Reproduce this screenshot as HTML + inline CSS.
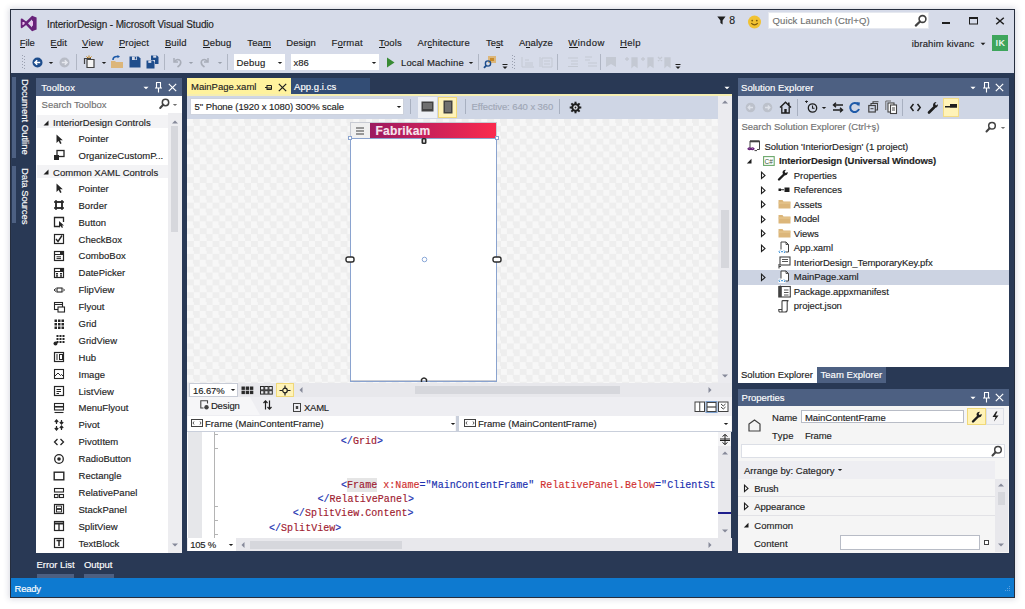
<!DOCTYPE html>
<html><head><meta charset="utf-8">
<style>
*{margin:0;padding:0;box-sizing:border-box}
html,body{width:1025px;height:609px;overflow:hidden;background:#fff;font-family:"Liberation Sans",sans-serif;font-size:10px;color:#1e1e1e}
.a{position:absolute;white-space:nowrap}
.t{line-height:1;-webkit-text-stroke:0.15px currentColor}
svg.a{overflow:visible}
</style></head><body>
<div class="a" style="left:10px;top:9px;width:1005px;height:589px;background:#262e3e;box-shadow:0 0 6px 1px rgba(40,50,90,0.18)"></div>
<div class="a" style="left:11px;top:10px;width:1003px;height:587px;background:#293955;"></div>
<div class="a" style="left:11px;top:10px;width:1003px;height:63px;background:#d6dbe9;"></div>
<svg class="a" style="left:16px;top:12px;" width="28" height="22" viewBox="0 0 28 22"><path d="M5.6 7.3 L11 11.3 L5.6 15.3 Z" fill="#f0c0f0" stroke="#68217a" stroke-width="1.7" stroke-linejoin="round"/><path d="M17 4.6 L10.2 11.3 L17 18.4" fill="none" stroke="#68217a" stroke-width="2.6"/><path d="M16 3.8 L20.6 5.6 L20.6 17.4 L16 19.2 Z" fill="#68217a"/><path d="M13.6 11.3 L17 8.4 L17 14.2 Z" fill="#f0c0f0"/></svg>
<div class="a t" style="left:47px;top:20px;font-size:10px;color:#1e1e1e;letter-spacing:-0.147px;font-weight:normal;font-family:'Liberation Sans',sans-serif;">InteriorDesign - Microsoft Visual Studio</div>
<svg class="a" style="left:716.5px;top:15.5px;" width="9" height="9" viewBox="0 0 9 9"><path d="M0.3 0.5 L8.5 0.5 L5.6 4.4 L5.6 8.6 L3.4 7 L3.4 4.4 Z" fill="#1e1e1e"/></svg>
<div class="a t" style="left:729.3px;top:15px;font-size:10.5px;color:#1e1e1e;letter-spacing:0.36px;font-weight:normal;font-family:'Liberation Sans',sans-serif;">8</div>
<svg class="a" style="left:747px;top:15px;" width="15" height="14" viewBox="0 0 15 14"><circle cx="7.5" cy="7" r="6.5" fill="#f1c232"/><circle cx="5.2" cy="5.6" r="0.9" fill="#7a5a10"/><circle cx="9.8" cy="5.6" r="0.9" fill="#7a5a10"/><path d="M4.2 8.2 Q7.5 11.5 10.8 8.2" stroke="#7a5a10" stroke-width="1.1" fill="none"/></svg>
<div class="a" style="left:768px;top:12px;width:161px;height:16.5px;background:#ffffff;border:1px solid #e6e9f0"></div>
<div class="a t" style="left:772.6px;top:16px;font-size:9.5px;color:#717171;letter-spacing:0.116px;font-weight:normal;font-family:'Liberation Sans',sans-serif;">Quick Launch (Ctrl+Q)</div>
<svg class="a" style="left:914px;top:14px;" width="14" height="13" viewBox="0 0 14 13"><circle cx="8.5" cy="5" r="3.4" stroke="#424242" stroke-width="1.6" fill="none"/><path d="M6 7.5 L1.8 11.6" stroke="#424242" stroke-width="2.2" stroke-linecap="round"/></svg>
<div class="a" style="left:942px;top:21.5px;width:7.5px;height:2.5px;background:#1e1e1e;"></div>
<svg class="a" style="left:968px;top:16px;" width="11" height="9" viewBox="0 0 11 9"><rect x="1.5" y="1.5" width="8" height="6.5" fill="none" stroke="#1e1e1e" stroke-width="1"/><rect x="1" y="1" width="9" height="2" fill="#1e1e1e"/></svg>
<svg class="a" style="left:995px;top:17px;" width="10" height="8" viewBox="0 0 10 8"><path d="M1.2 0.8 L8.8 7.2 M8.8 0.8 L1.2 7.2" stroke="#1e1e1e" stroke-width="1.5"/></svg>
<div class="a t" style="left:19.8px;top:38px;font-size:9.5px;color:#1e1e1e;letter-spacing:-0.127px;font-weight:normal;font-family:'Liberation Sans',sans-serif;">File</div>
<div class="a" style="left:20.1px;top:47px;width:5.2px;height:1px;background:#1e1e1e;"></div>
<div class="a t" style="left:50.2px;top:38px;font-size:9.5px;color:#1e1e1e;letter-spacing:0.108px;font-weight:normal;font-family:'Liberation Sans',sans-serif;">Edit</div>
<div class="a" style="left:50.5px;top:47px;width:6.0px;height:1px;background:#1e1e1e;"></div>
<div class="a t" style="left:82px;top:38px;font-size:9.5px;color:#1e1e1e;letter-spacing:0.27px;font-weight:normal;font-family:'Liberation Sans',sans-serif;">View</div>
<div class="a" style="left:82.3px;top:47px;width:6.1px;height:1px;background:#1e1e1e;"></div>
<div class="a t" style="left:119px;top:38px;font-size:9.5px;color:#1e1e1e;letter-spacing:0.033px;font-weight:normal;font-family:'Liberation Sans',sans-serif;">Project</div>
<div class="a" style="left:119.3px;top:47px;width:5.9px;height:1px;background:#1e1e1e;"></div>
<div class="a t" style="left:164.9px;top:38px;font-size:9.5px;color:#1e1e1e;letter-spacing:0.135px;font-weight:normal;font-family:'Liberation Sans',sans-serif;">Build</div>
<div class="a" style="left:165.2px;top:47px;width:6.0px;height:1px;background:#1e1e1e;"></div>
<div class="a t" style="left:202.7px;top:38px;font-size:9.5px;color:#1e1e1e;letter-spacing:0.161px;font-weight:normal;font-family:'Liberation Sans',sans-serif;">Debug</div>
<div class="a" style="left:203.0px;top:47px;width:6.5px;height:1px;background:#1e1e1e;"></div>
<div class="a t" style="left:247.3px;top:38px;font-size:9.5px;color:#1e1e1e;letter-spacing:0.142px;font-weight:normal;font-family:'Liberation Sans',sans-serif;">Team</div>
<div class="a" style="left:263.2px;top:47px;width:7.6px;height:1px;background:#1e1e1e;"></div>
<div class="a t" style="left:286.3px;top:38px;font-size:9.5px;color:#1e1e1e;letter-spacing:-0.012px;font-weight:normal;font-family:'Liberation Sans',sans-serif;">Design</div>
<div class="a t" style="left:331.5px;top:38px;font-size:9.5px;color:#1e1e1e;letter-spacing:0.202px;font-weight:normal;font-family:'Liberation Sans',sans-serif;">Format</div>
<div class="a" style="left:337.8px;top:47px;width:4.9px;height:1px;background:#1e1e1e;"></div>
<div class="a t" style="left:379px;top:38px;font-size:9.5px;color:#1e1e1e;letter-spacing:0.125px;font-weight:normal;font-family:'Liberation Sans',sans-serif;">Tools</div>
<div class="a" style="left:379.3px;top:47px;width:5.4px;height:1px;background:#1e1e1e;"></div>
<div class="a t" style="left:417.6px;top:38px;font-size:9.5px;color:#1e1e1e;letter-spacing:0.126px;font-weight:normal;font-family:'Liberation Sans',sans-serif;">Architecture</div>
<div class="a" style="left:427.7px;top:47px;width:4.3px;height:1px;background:#1e1e1e;"></div>
<div class="a t" style="left:486px;top:38px;font-size:9.5px;color:#1e1e1e;letter-spacing:-0.056px;font-weight:normal;font-family:'Liberation Sans',sans-serif;">Test</div>
<div class="a" style="left:496.3px;top:47px;width:4.1px;height:1px;background:#1e1e1e;"></div>
<div class="a t" style="left:519px;top:38px;font-size:9.5px;color:#1e1e1e;letter-spacing:0.0px;font-weight:normal;font-family:'Liberation Sans',sans-serif;">Analyze</div>
<div class="a" style="left:525.7px;top:47px;width:4.7px;height:1px;background:#1e1e1e;"></div>
<div class="a t" style="left:568.3px;top:38px;font-size:9.5px;color:#1e1e1e;letter-spacing:0.452px;font-weight:normal;font-family:'Liberation Sans',sans-serif;">Window</div>
<div class="a" style="left:568.6px;top:47px;width:9.0px;height:1px;background:#1e1e1e;"></div>
<div class="a t" style="left:620px;top:38px;font-size:9.5px;color:#1e1e1e;letter-spacing:0.315px;font-weight:normal;font-family:'Liberation Sans',sans-serif;">Help</div>
<div class="a" style="left:620.3px;top:47px;width:6.7px;height:1px;background:#1e1e1e;"></div>
<div class="a t" style="left:911.7px;top:39px;font-size:9.5px;color:#1e1e1e;letter-spacing:0.149px;font-weight:normal;font-family:'Liberation Sans',sans-serif;">ibrahim kivanc</div>
<svg class="a" style="left:979.3px;top:40.5px;" width="8" height="6" viewBox="0 0 8 6"><path d="M1.6 1.8 L6.4 1.8 L4 4.2 Z" fill="#1e1e1e"/></svg>
<div class="a" style="left:992px;top:35px;width:16px;height:16px;background:#3ea55c;"></div>
<div class="a t" style="left:995.5px;top:38px;font-size:9.5px;color:#ffffff;letter-spacing:0.412px;font-weight:normal;font-family:'Liberation Sans',sans-serif;">IK</div>
<div class="a" style="left:22px;top:55px;width:1px;height:1px;background:#9aa0b0;"></div>
<div class="a" style="left:24px;top:56px;width:1px;height:1px;background:#9aa0b0;"></div>
<div class="a" style="left:22px;top:58px;width:1px;height:1px;background:#9aa0b0;"></div>
<div class="a" style="left:24px;top:59px;width:1px;height:1px;background:#9aa0b0;"></div>
<div class="a" style="left:22px;top:61px;width:1px;height:1px;background:#9aa0b0;"></div>
<div class="a" style="left:24px;top:62px;width:1px;height:1px;background:#9aa0b0;"></div>
<div class="a" style="left:22px;top:64px;width:1px;height:1px;background:#9aa0b0;"></div>
<div class="a" style="left:24px;top:65px;width:1px;height:1px;background:#9aa0b0;"></div>
<div class="a" style="left:22px;top:67px;width:1px;height:1px;background:#9aa0b0;"></div>
<div class="a" style="left:24px;top:68px;width:1px;height:1px;background:#9aa0b0;"></div>
<svg class="a" style="left:32px;top:57px;" width="11" height="11" viewBox="0 0 11 11"><circle cx="5.5" cy="5.5" r="5" fill="#1e4d8c"/><path d="M8.2 5.5 L3 5.5 M5.2 3.2 L2.9 5.5 L5.2 7.8" stroke="#fff" stroke-width="1.5" fill="none"/></svg>
<svg class="a" style="left:46.6px;top:59.5px;" width="8" height="6" viewBox="0 0 8 6"><path d="M1.7999999999999998 1.9 L6.2 1.9 L4 4.1 Z" fill="#1e1e1e"/></svg>
<svg class="a" style="left:59px;top:57px;" width="11" height="11" viewBox="0 0 11 11"><circle cx="5.5" cy="5.5" r="5" fill="#b8bcc6"/><path d="M2.8 5.5 L8 5.5 M5.8 3.2 L8.1 5.5 L5.8 7.8" stroke="#e6e8ee" stroke-width="1.5" fill="none"/></svg>
<div class="a" style="left:76px;top:54px;width:1px;height:16px;background:#b0b6c4;"></div>
<svg class="a" style="left:83px;top:55px;" width="14" height="14" viewBox="0 0 14 14"><path d="M4 4.5 L11 4.5 L11 12.5 L4 12.5 Z" fill="#f5f5f5" stroke="#424242" stroke-width="1.2"/><path d="M1.5 9 L1.5 3.5 L8 3.5" stroke="#424242" stroke-width="1.2" fill="none"/><path d="M6 0.5 L6 3 M3.5 1.5 L5 3 M8.5 1.5 L7 3" stroke="#c27d0e" stroke-width="1"/></svg>
<svg class="a" style="left:99.5px;top:59.5px;" width="8" height="6" viewBox="0 0 8 6"><path d="M1.7999999999999998 1.9 L6.2 1.9 L4 4.1 Z" fill="#1e1e1e"/></svg>
<svg class="a" style="left:110px;top:55px;" width="14" height="14" viewBox="0 0 14 14"><path d="M1 6 L5 6 L6 7 L13 7 L13 13 L1 13 Z" fill="#dcb67a"/><path d="M3 5 Q3 1.5 7 1.5 L8 1.5" stroke="#1e5aa8" stroke-width="1.6" fill="none"/><path d="M7.5 0 L10 1.6 L7.5 3.2 Z" fill="#1e5aa8"/></svg>
<svg class="a" style="left:129px;top:56px;" width="12" height="12" viewBox="0 0 12 12"><path d="M0.5 0.5 L9.5 0.5 L11.5 2.5 L11.5 11.5 L0.5 11.5 Z" fill="#1e4d8c"/><rect x="3" y="0.5" width="5" height="3.5" fill="#d6dbe9"/><rect x="5.8" y="1" width="1.4" height="2.4" fill="#1e4d8c"/></svg>
<svg class="a" style="left:146px;top:55px;" width="13" height="14" viewBox="0 0 13 14"><path d="M0.5 5.5 L7 5.5 L8.5 7 L8.5 13.5 L0.5 13.5 Z" fill="#1e4d8c"/><path d="M5 0.5 L11 0.5 L12.5 2 L12.5 9 L9 9 L9 5 L5 5 Z" fill="#1e4d8c"/><rect x="2.3" y="5.5" width="3" height="2.4" fill="#d6dbe9"/><rect x="7.2" y="0.5" width="3" height="2.2" fill="#d6dbe9"/></svg>
<div class="a" style="left:163.5px;top:54px;width:1.0px;height:16px;background:#b0b6c4;"></div>
<svg class="a" style="left:171px;top:56px;" width="12" height="12" viewBox="0 0 12 12"><path d="M3 2 L3 6 L7 6" stroke="#a8adb8" stroke-width="1.5" fill="none"/><path d="M3.5 5.5 Q6 2.5 8.5 4 Q11 6 8.5 9.5 L6.5 11" stroke="#a8adb8" stroke-width="1.6" fill="none"/></svg>
<svg class="a" style="left:187px;top:59.5px;" width="8" height="6" viewBox="0 0 8 6"><path d="M1.7999999999999998 1.9 L6.2 1.9 L4 4.1 Z" fill="#9aa0ac"/></svg>
<svg class="a" style="left:199px;top:56px;" width="12" height="12" viewBox="0 0 12 12"><path d="M9 2 L9 6 L5 6" stroke="#a8adb8" stroke-width="1.5" fill="none"/><path d="M8.5 5.5 Q6 2.5 3.5 4 Q1 6 3.5 9.5 L5.5 11" stroke="#a8adb8" stroke-width="1.6" fill="none"/></svg>
<svg class="a" style="left:216px;top:59.5px;" width="8" height="6" viewBox="0 0 8 6"><path d="M1.7999999999999998 1.9 L6.2 1.9 L4 4.1 Z" fill="#9aa0ac"/></svg>
<div class="a" style="left:227px;top:54px;width:1px;height:16px;background:#b0b6c4;"></div>
<div class="a" style="left:234px;top:54px;width:51px;height:16px;background:#ffffff;"></div>
<div class="a t" style="left:236.6px;top:58px;font-size:9.5px;color:#1e1e1e;letter-spacing:0.161px;font-weight:normal;font-family:'Liberation Sans',sans-serif;">Debug</div>
<svg class="a" style="left:275.7px;top:59.5px;" width="8" height="6" viewBox="0 0 8 6"><path d="M1.7999999999999998 1.9 L6.2 1.9 L4 4.1 Z" fill="#1e1e1e"/></svg>
<div class="a" style="left:291px;top:54px;width:88px;height:16px;background:#ffffff;"></div>
<div class="a t" style="left:293.5px;top:58px;font-size:9.5px;color:#1e1e1e;letter-spacing:-0.006px;font-weight:normal;font-family:'Liberation Sans',sans-serif;">x86</div>
<svg class="a" style="left:369.5px;top:59.5px;" width="8" height="6" viewBox="0 0 8 6"><path d="M1.7999999999999998 1.9 L6.2 1.9 L4 4.1 Z" fill="#1e1e1e"/></svg>
<svg class="a" style="left:386px;top:57px;" width="9" height="11" viewBox="0 0 9 11"><path d="M1 0.5 L8.5 5.5 L1 10.5 Z" fill="#388a34"/></svg>
<div class="a t" style="left:401px;top:58px;font-size:9.5px;color:#1e1e1e;letter-spacing:0.119px;font-weight:normal;font-family:'Liberation Sans',sans-serif;">Local Machine</div>
<svg class="a" style="left:466.6px;top:59.5px;" width="8" height="6" viewBox="0 0 8 6"><path d="M1.7999999999999998 1.9 L6.2 1.9 L4 4.1 Z" fill="#1e1e1e"/></svg>
<div class="a" style="left:477.5px;top:54px;width:1.0px;height:16px;background:#b0b6c4;"></div>
<svg class="a" style="left:483px;top:55px;" width="14" height="14" viewBox="0 0 14 14"><rect x="5" y="1" width="8" height="7" fill="#dcb67a"/><rect x="7" y="3" width="4" height="3" fill="#c98b2a"/><circle cx="5" cy="8.5" r="2.6" stroke="#1e4d8c" stroke-width="1.4" fill="none"/><path d="M3.3 10.3 L1 12.8" stroke="#1e4d8c" stroke-width="1.8"/></svg>
<svg class="a" style="left:502px;top:64px;" width="7" height="6" viewBox="0 0 7 6"><rect x="0.5" y="0" width="5" height="1" fill="#1e1e1e"/><path d="M0.5 2.5 L5.5 2.5 L3 5 Z" fill="#1e1e1e"/></svg>
<div class="a" style="left:512px;top:55px;width:1px;height:1px;background:#9aa0b0;"></div>
<div class="a" style="left:514px;top:56px;width:1px;height:1px;background:#9aa0b0;"></div>
<div class="a" style="left:512px;top:58px;width:1px;height:1px;background:#9aa0b0;"></div>
<div class="a" style="left:514px;top:59px;width:1px;height:1px;background:#9aa0b0;"></div>
<div class="a" style="left:512px;top:61px;width:1px;height:1px;background:#9aa0b0;"></div>
<div class="a" style="left:514px;top:62px;width:1px;height:1px;background:#9aa0b0;"></div>
<div class="a" style="left:512px;top:64px;width:1px;height:1px;background:#9aa0b0;"></div>
<div class="a" style="left:514px;top:65px;width:1px;height:1px;background:#9aa0b0;"></div>
<div class="a" style="left:512px;top:67px;width:1px;height:1px;background:#9aa0b0;"></div>
<div class="a" style="left:514px;top:68px;width:1px;height:1px;background:#9aa0b0;"></div>
<svg class="a" style="left:521px;top:56px;" width="14" height="12" viewBox="0 0 14 12"><path d="M1 1 L1 11 L13 11 M4 4 L8 4 M4 7 L12 7 M4 9 L12 9" stroke="#c4c9d3" stroke-width="1" fill="none"/></svg>
<svg class="a" style="left:539px;top:56px;" width="14" height="12" viewBox="0 0 14 12"><path d="M1 1 L1 11 M3 2 L13 2 L13 11 L3 11 Z M5 5 L11 5 M5 8 L11 8" stroke="#c4c9d3" stroke-width="1" fill="none"/></svg>
<div class="a" style="left:556.5px;top:54px;width:1.0px;height:16px;background:#b0b6c4;"></div>
<svg class="a" style="left:567px;top:57px;" width="12" height="10" viewBox="0 0 12 10"><path d="M1 1 L11 1 M4 4 L11 4 M4 7 L11 7 M1 9.5 L11 9.5" stroke="#c4c9d3" stroke-width="1"/></svg>
<svg class="a" style="left:584px;top:56px;" width="14" height="12" viewBox="0 0 14 12"><path d="M1 1 L8 1 M1 4 L6 4 M4 7 L13 7 M4 10 L13 10" stroke="#c4c9d3" stroke-width="1"/></svg>
<div class="a" style="left:599.5px;top:54px;width:1.0px;height:16px;background:#b0b6c4;"></div>
<svg class="a" style="left:605px;top:56px;" width="12" height="12" viewBox="0 0 12 12"><path d="M1 1 L11 1 L11 11 L6 8 L1 11 Z" fill="#c4c9d3"/></svg>
<svg class="a" style="left:624px;top:56px;" width="14" height="12" viewBox="0 0 14 12"><path d="M3 1 L3 5 M1 3 L5 3 M8 2 L13 2 L13 11 L10 9 L8 11 Z" stroke="#c4c9d3" stroke-width="1.3" fill="#c4c9d3"/></svg>
<svg class="a" style="left:640px;top:56px;" width="14" height="12" viewBox="0 0 14 12"><path d="M3 1 L3 5 M1 3 L5 3 M8 2 L13 2 L13 11 L10 9 L8 11 Z" stroke="#c4c9d3" stroke-width="1.3" fill="#c4c9d3"/></svg>
<svg class="a" style="left:657px;top:56px;" width="14" height="12" viewBox="0 0 14 12"><path d="M1 1 L5 5 M5 1 L1 5 M8 2 L13 2 L13 11 L10 9 L8 11 Z" stroke="#c4c9d3" stroke-width="1.3" fill="#c4c9d3"/></svg>
<svg class="a" style="left:675px;top:64px;" width="7" height="6" viewBox="0 0 7 6"><rect x="0.5" y="0" width="5" height="1" fill="#1e1e1e"/><path d="M0.5 2.5 L5.5 2.5 L3 5 Z" fill="#1e1e1e"/></svg>
<div class="a" style="left:12px;top:77px;width:4px;height:81px;background:#4d6082;"></div>
<div class="a" style="left:12px;top:166px;width:4px;height:57px;background:#4d6082;"></div>
<div class="a t" style="left:19.5px;top:79px;font-size:9.5px;color:#ffffff;letter-spacing:-0.02px;transform-origin:0 0;transform:translate(10px,0) rotate(90deg)">Document Outline</div>
<div class="a t" style="left:19.5px;top:168px;font-size:9.5px;color:#ffffff;letter-spacing:-0.1px;transform-origin:0 0;transform:translate(10px,0) rotate(90deg)">Data Sources</div>
<div class="a" style="left:36px;top:78px;width:145.5px;height:18px;background:#4d6082;"></div>
<div class="a t" style="left:41.3px;top:83px;font-size:9.5px;color:#ffffff;letter-spacing:0.151px;font-weight:normal;font-family:'Liberation Sans',sans-serif;">Toolbox</div>
<svg class="a" style="left:142px;top:84.5px;" width="8" height="6" viewBox="0 0 8 6"><path d="M1.4 1.7 L6.6 1.7 L4 4.3 Z" fill="#ffffff"/></svg>
<svg class="a" style="left:154px;top:82px;" width="9" height="11" viewBox="0 0 9 11"><path d="M2 0.5 L7 0.5 M2.5 0.5 L2.5 6 M6.5 0.5 L6.5 6 M1 6 L8 6 M4.5 6 L4.5 10.5" stroke="#ffffff" stroke-width="1.1" fill="none"/></svg>
<svg class="a" style="left:167.5px;top:83px;" width="9" height="9" viewBox="0 0 9 9"><path d="M0.8 0.8 L8.2 8.2 M8.2 0.8 L0.8 8.2" stroke="#ffffff" stroke-width="1.2"/></svg>
<div class="a" style="left:36px;top:96px;width:145.5px;height:16px;background:#ffffff;"></div>
<div class="a t" style="left:41.6px;top:100px;font-size:9.5px;color:#717171;letter-spacing:-0.037px;font-weight:normal;font-family:'Liberation Sans',sans-serif;">Search Toolbox</div>
<svg class="a" style="left:159px;top:98px;" width="11" height="12" viewBox="0 0 11 12"><circle cx="6.5" cy="4.5" r="3.2" stroke="#424242" stroke-width="1.5" fill="none"/><path d="M4.2 6.8 L1.2 10" stroke="#424242" stroke-width="2" stroke-linecap="round"/></svg>
<svg class="a" style="left:171.3px;top:101.5px;" width="8" height="6" viewBox="0 0 8 6"><path d="M1.7999999999999998 1.9 L6.2 1.9 L4 4.1 Z" fill="#717171"/></svg>
<div class="a" style="left:36px;top:112px;width:145.5px;height:440.5px;background:#ffffff;"></div>
<div class="a" style="left:167.5px;top:113px;width:14.0px;height:439.5px;background:#ededf0;"></div>
<div class="a" style="left:171.4px;top:126px;width:6.9px;height:106px;background:#d6d7dc;"></div>
<svg class="a" style="left:171px;top:118.5px;" width="8" height="6" viewBox="0 0 8 6"><path d="M1 4.5 L7 4.5 L4 1.5 Z" fill="#868999"/></svg>
<svg class="a" style="left:171px;top:542px;" width="8" height="6" viewBox="0 0 8 6"><path d="M1 1.5 L7 1.5 L4 4.5 Z" fill="#868999"/></svg>
<div class="a" style="left:37px;top:115.0px;width:130.5px;height:13.4px;background:#f3f3f5;"></div>
<svg class="a" style="left:42px;top:118.5px;" width="8" height="8" viewBox="0 0 8 8"><path d="M1.5 6.5 L6.5 6.5 L6.5 1.5 Z" fill="#1e1e1e"/></svg>
<div class="a t" style="left:53px;top:118px;font-size:9.5px;color:#1e1e1e;letter-spacing:0.022px;font-weight:normal;font-family:'Liberation Sans',sans-serif;">InteriorDesign Controls</div>
<svg class="a" style="left:52.8px;top:132.5px;" width="12" height="12" viewBox="0 0 12 12"><path d="M3.5 1.5 L3.5 10 L5.6 8 L7.2 11 L8.6 10.3 L7 7.3 L9.8 7.3 Z" fill="#262626"/></svg>
<div class="a t" style="left:78.5px;top:134px;font-size:9.5px;color:#1e1e1e;letter-spacing:0.023px;font-weight:normal;font-family:'Liberation Sans',sans-serif;">Pointer</div>
<svg class="a" style="left:52.8px;top:149.4px;" width="12" height="12" viewBox="0 0 12 12"><rect x="4" y="1.5" width="7" height="6" fill="none" stroke="#262626" stroke-width="1.3"/><rect x="1" y="6" width="5" height="5" fill="#262626"/></svg>
<div class="a t" style="left:78.5px;top:151px;font-size:9.5px;color:#1e1e1e;letter-spacing:0.025px;font-weight:normal;font-family:'Liberation Sans',sans-serif;">OrganizeCustomP...</div>
<div class="a" style="left:37px;top:164.8px;width:130.5px;height:13.4px;background:#f3f3f5;"></div>
<svg class="a" style="left:42px;top:168.3px;" width="8" height="8" viewBox="0 0 8 8"><path d="M1.5 6.5 L6.5 6.5 L6.5 1.5 Z" fill="#1e1e1e"/></svg>
<div class="a t" style="left:53px;top:168px;font-size:9.5px;color:#1e1e1e;letter-spacing:0.028px;font-weight:normal;font-family:'Liberation Sans',sans-serif;">Common XAML Controls</div>
<svg class="a" style="left:52.8px;top:182.3px;" width="12" height="12" viewBox="0 0 12 12"><path d="M3.5 1.5 L3.5 10 L5.6 8 L7.2 11 L8.6 10.3 L7 7.3 L9.8 7.3 Z" fill="#262626"/></svg>
<div class="a t" style="left:78.5px;top:184px;font-size:9.5px;color:#1e1e1e;letter-spacing:0.023px;font-weight:normal;font-family:'Liberation Sans',sans-serif;">Pointer</div>
<svg class="a" style="left:52.8px;top:199.20000000000002px;" width="12" height="12" viewBox="0 0 12 12"><rect x="3" y="3" width="6" height="6" fill="none" stroke="#262626" stroke-width="1.4"/><path d="M1 3 L11 3 M1 9 L11 9 M3 1 L3 11 M9 1 L9 11" stroke="#262626" stroke-width="1.4"/></svg>
<div class="a t" style="left:78.5px;top:201px;font-size:9.5px;color:#1e1e1e;letter-spacing:0.025px;font-weight:normal;font-family:'Liberation Sans',sans-serif;">Border</div>
<svg class="a" style="left:52.8px;top:216.10000000000002px;" width="12" height="12" viewBox="0 0 12 12"><path d="M7 10.5 L1.5 10.5 L1.5 1.5 L10.5 1.5 L10.5 6" fill="none" stroke="#262626" stroke-width="1.3"/><path d="M6 5 L6 11.5 L7.5 10 L9 12 L10 11.3 L9 9.5 L11 9.5 Z" fill="#262626"/></svg>
<div class="a t" style="left:78.5px;top:218px;font-size:9.5px;color:#1e1e1e;letter-spacing:0.024px;font-weight:normal;font-family:'Liberation Sans',sans-serif;">Button</div>
<svg class="a" style="left:52.8px;top:233.00000000000003px;" width="12" height="12" viewBox="0 0 12 12"><rect x="1.5" y="1.5" width="9" height="9" fill="none" stroke="#262626" stroke-width="1.2"/><path d="M3 6 L5 8.5 L9 2.5" stroke="#262626" stroke-width="1.4" fill="none"/></svg>
<div class="a t" style="left:78.5px;top:235px;font-size:9.5px;color:#1e1e1e;letter-spacing:0.028px;font-weight:normal;font-family:'Liberation Sans',sans-serif;">CheckBox</div>
<svg class="a" style="left:52.8px;top:249.90000000000003px;" width="12" height="12" viewBox="0 0 12 12"><rect x="1.5" y="1.5" width="9" height="9" fill="none" stroke="#262626" stroke-width="1.2"/><path d="M1.5 4.5 L10.5 4.5 M3.5 6.8 L8 6.8 M3.5 8.6 L8 8.6" stroke="#262626" stroke-width="1"/><rect x="7" y="1.5" width="3.5" height="3" fill="#262626"/></svg>
<div class="a t" style="left:78.5px;top:251px;font-size:9.5px;color:#1e1e1e;letter-spacing:0.031px;font-weight:normal;font-family:'Liberation Sans',sans-serif;">ComboBox</div>
<svg class="a" style="left:52.8px;top:266.8px;" width="12" height="12" viewBox="0 0 12 12"><rect x="1.5" y="1.5" width="9" height="9" fill="none" stroke="#262626" stroke-width="1.2"/><path d="M1.5 4.5 L10.5 4.5" stroke="#262626" stroke-width="1"/><rect x="3" y="6" width="2" height="1.5" fill="#262626"/><rect x="7" y="6" width="2" height="1.5" fill="#262626"/><rect x="3" y="8.2" width="2" height="1.5" fill="#262626"/><rect x="7" y="8.2" width="2" height="1.5" fill="#262626"/><rect x="7" y="1.5" width="3.5" height="3" fill="#262626"/></svg>
<div class="a t" style="left:78.5px;top:268px;font-size:9.5px;color:#1e1e1e;letter-spacing:0.024px;font-weight:normal;font-family:'Liberation Sans',sans-serif;">DatePicker</div>
<svg class="a" style="left:52.8px;top:283.7px;" width="12" height="12" viewBox="0 0 12 12"><rect x="4" y="4" width="5" height="4" fill="none" stroke="#262626" stroke-width="1.1"/><path d="M3 4.5 L1 6 L3 7.5 M10 4.5 L11.5 6 L10 7.5" stroke="#262626" stroke-width="1" fill="none"/></svg>
<div class="a t" style="left:78.5px;top:285px;font-size:9.5px;color:#1e1e1e;letter-spacing:0.024px;font-weight:normal;font-family:'Liberation Sans',sans-serif;">FlipView</div>
<svg class="a" style="left:52.8px;top:300.59999999999997px;" width="12" height="12" viewBox="0 0 12 12"><rect x="1.5" y="1.5" width="8" height="7" fill="none" stroke="#262626" stroke-width="1.1"/><path d="M1.5 3.5 L9.5 3.5" stroke="#262626" stroke-width="1"/><rect x="5" y="6" width="6.5" height="5" fill="#fff" stroke="#262626" stroke-width="1.1"/></svg>
<div class="a t" style="left:78.5px;top:302px;font-size:9.5px;color:#1e1e1e;letter-spacing:0.023px;font-weight:normal;font-family:'Liberation Sans',sans-serif;">Flyout</div>
<svg class="a" style="left:52.8px;top:317.49999999999994px;" width="12" height="12" viewBox="0 0 12 12"><rect x="1.5" y="1.5" width="2.5" height="2.5" fill="#262626"/><rect x="1.5" y="5.0" width="2.5" height="2.5" fill="#262626"/><rect x="1.5" y="8.5" width="2.5" height="2.5" fill="#262626"/><rect x="5.0" y="1.5" width="2.5" height="2.5" fill="#262626"/><rect x="5.0" y="5.0" width="2.5" height="2.5" fill="#262626"/><rect x="5.0" y="8.5" width="2.5" height="2.5" fill="#262626"/><rect x="8.5" y="1.5" width="2.5" height="2.5" fill="#262626"/><rect x="8.5" y="5.0" width="2.5" height="2.5" fill="#262626"/><rect x="8.5" y="8.5" width="2.5" height="2.5" fill="#262626"/></svg>
<div class="a t" style="left:78.5px;top:319px;font-size:9.5px;color:#1e1e1e;letter-spacing:0.024px;font-weight:normal;font-family:'Liberation Sans',sans-serif;">Grid</div>
<svg class="a" style="left:52.8px;top:334.3999999999999px;" width="12" height="12" viewBox="0 0 12 12"><rect x="3.5" y="1" width="2" height="2" fill="#262626"/><rect x="3.5" y="4" width="2" height="2" fill="#262626"/><rect x="3.5" y="7" width="2" height="2" fill="#262626"/><rect x="6.5" y="1" width="2" height="2" fill="#262626"/><rect x="6.5" y="4" width="2" height="2" fill="#262626"/><rect x="6.5" y="7" width="2" height="2" fill="#262626"/><rect x="9.5" y="1" width="2" height="2" fill="#262626"/><rect x="9.5" y="4" width="2" height="2" fill="#262626"/><rect x="9.5" y="7" width="2" height="2" fill="#262626"/><circle cx="2.5" cy="9.5" r="2" fill="#262626"/></svg>
<div class="a t" style="left:78.5px;top:336px;font-size:9.5px;color:#1e1e1e;letter-spacing:0.025px;font-weight:normal;font-family:'Liberation Sans',sans-serif;">GridView</div>
<svg class="a" style="left:52.8px;top:351.2999999999999px;" width="12" height="12" viewBox="0 0 12 12"><rect x="1.5" y="1.5" width="9" height="9" fill="none" stroke="#262626" stroke-width="1.2"/><path d="M3 4 L5 4 M3 6 L5 6 M3 8 L5 8" stroke="#262626" stroke-width="1"/><rect x="6.5" y="3.5" width="3" height="5" fill="none" stroke="#262626" stroke-width="1"/></svg>
<div class="a t" style="left:78.5px;top:353px;font-size:9.5px;color:#1e1e1e;letter-spacing:0.031px;font-weight:normal;font-family:'Liberation Sans',sans-serif;">Hub</div>
<svg class="a" style="left:52.8px;top:368.1999999999999px;" width="12" height="12" viewBox="0 0 12 12"><rect x="1.5" y="1.5" width="9" height="9" fill="none" stroke="#262626" stroke-width="1.1"/><path d="M2 8 L5 5 L7.5 7.5 L8.5 6.5 L10.5 8.5" stroke="#262626" stroke-width="1" fill="none"/></svg>
<div class="a t" style="left:78.5px;top:370px;font-size:9.5px;color:#1e1e1e;letter-spacing:0.028px;font-weight:normal;font-family:'Liberation Sans',sans-serif;">Image</div>
<svg class="a" style="left:52.8px;top:385.09999999999985px;" width="12" height="12" viewBox="0 0 12 12"><rect x="1.5" y="1.5" width="9" height="9" fill="none" stroke="#262626" stroke-width="1.2"/><path d="M3.5 4.5 L8 4.5 M3.5 6.5 L8 6.5 M3.5 8.5 L6 8.5" stroke="#262626" stroke-width="1"/></svg>
<div class="a t" style="left:78.5px;top:387px;font-size:9.5px;color:#1e1e1e;letter-spacing:0.023px;font-weight:normal;font-family:'Liberation Sans',sans-serif;">ListView</div>
<svg class="a" style="left:52.8px;top:401.99999999999983px;" width="12" height="12" viewBox="0 0 12 12"><rect x="1.5" y="1.5" width="9" height="3" fill="none" stroke="#262626" stroke-width="1.1"/><rect x="1.5" y="5" width="9" height="3" fill="none" stroke="#262626" stroke-width="1.1"/><path d="M1.5 10.5 L10.5 10.5" stroke="#262626" stroke-width="1.1"/></svg>
<div class="a t" style="left:78.5px;top:403px;font-size:9.5px;color:#1e1e1e;letter-spacing:0.026px;font-weight:normal;font-family:'Liberation Sans',sans-serif;">MenuFlyout</div>
<svg class="a" style="left:52.8px;top:418.8999999999998px;" width="12" height="12" viewBox="0 0 12 12"><path d="M3.5 1 L3.5 5 M1.8 3 L3.5 1 L5.2 3 M8.5 1 L8.5 5 M6.8 3 L8.5 5 L10.2 3 M3.5 7 L3.5 11 M1.8 9 L3.5 11 L5.2 9 M8.5 7 L8.5 11 M6.8 9 L8.5 7 L10.2 9" stroke="#262626" stroke-width="1.2" fill="none"/></svg>
<div class="a t" style="left:78.5px;top:420px;font-size:9.5px;color:#1e1e1e;letter-spacing:0.022px;font-weight:normal;font-family:'Liberation Sans',sans-serif;">Pivot</div>
<svg class="a" style="left:52.8px;top:435.7999999999998px;" width="12" height="12" viewBox="0 0 12 12"><path d="M4.5 3 L1.5 6 L4.5 9 M7.5 3 L10.5 6 L7.5 9" stroke="#262626" stroke-width="1.3" fill="none"/></svg>
<div class="a t" style="left:78.5px;top:437px;font-size:9.5px;color:#1e1e1e;letter-spacing:0.023px;font-weight:normal;font-family:'Liberation Sans',sans-serif;">PivotItem</div>
<svg class="a" style="left:52.8px;top:452.69999999999976px;" width="12" height="12" viewBox="0 0 12 12"><circle cx="6" cy="6" r="4.3" fill="none" stroke="#262626" stroke-width="1.3"/><circle cx="6" cy="6" r="1.8" fill="#262626"/></svg>
<div class="a t" style="left:78.5px;top:454px;font-size:9.5px;color:#1e1e1e;letter-spacing:0.025px;font-weight:normal;font-family:'Liberation Sans',sans-serif;">RadioButton</div>
<svg class="a" style="left:52.8px;top:469.59999999999974px;" width="12" height="12" viewBox="0 0 12 12"><rect x="1.2" y="2.2" width="9.6" height="7.6" fill="none" stroke="#262626" stroke-width="1.4"/></svg>
<div class="a t" style="left:78.5px;top:471px;font-size:9.5px;color:#1e1e1e;letter-spacing:0.025px;font-weight:normal;font-family:'Liberation Sans',sans-serif;">Rectangle</div>
<svg class="a" style="left:52.8px;top:486.4999999999997px;" width="12" height="12" viewBox="0 0 12 12"><rect x="1.5" y="1.5" width="9" height="3.5" fill="none" stroke="#262626" stroke-width="1.1"/><rect x="1.5" y="7.5" width="3.5" height="3" fill="none" stroke="#262626" stroke-width="1.1"/><rect x="6.5" y="7.5" width="4" height="3" fill="none" stroke="#262626" stroke-width="1.1"/></svg>
<div class="a t" style="left:78.5px;top:488px;font-size:9.5px;color:#1e1e1e;letter-spacing:0.024px;font-weight:normal;font-family:'Liberation Sans',sans-serif;">RelativePanel</div>
<svg class="a" style="left:52.8px;top:503.39999999999975px;" width="12" height="12" viewBox="0 0 12 12"><rect x="1.5" y="1.5" width="9" height="9" fill="none" stroke="#262626" stroke-width="1.2"/><rect x="3.5" y="3" width="5" height="2.5" fill="none" stroke="#262626" stroke-width="0.9"/><rect x="3.5" y="6.5" width="5" height="2.5" fill="none" stroke="#262626" stroke-width="0.9"/></svg>
<div class="a t" style="left:78.5px;top:505px;font-size:9.5px;color:#1e1e1e;letter-spacing:0.025px;font-weight:normal;font-family:'Liberation Sans',sans-serif;">StackPanel</div>
<svg class="a" style="left:52.8px;top:520.2999999999997px;" width="12" height="12" viewBox="0 0 12 12"><rect x="1.5" y="1.5" width="9" height="9" fill="none" stroke="#262626" stroke-width="1.2"/><path d="M1.5 3.5 L10.5 3.5" stroke="#262626" stroke-width="2"/><path d="M6 3.5 L6 10.5" stroke="#262626" stroke-width="1.3"/></svg>
<div class="a t" style="left:78.5px;top:522px;font-size:9.5px;color:#1e1e1e;letter-spacing:0.023px;font-weight:normal;font-family:'Liberation Sans',sans-serif;">SplitView</div>
<svg class="a" style="left:52.8px;top:537.1999999999997px;" width="12" height="12" viewBox="0 0 12 12"><rect x="1.5" y="1.5" width="9" height="9" fill="none" stroke="#262626" stroke-width="1.2"/><path d="M3.5 3.5 L8.5 3.5 M6 3.5 L6 9" stroke="#262626" stroke-width="1.5"/></svg>
<div class="a t" style="left:78.5px;top:539px;font-size:9.5px;color:#1e1e1e;letter-spacing:0.024px;font-weight:normal;font-family:'Liberation Sans',sans-serif;">TextBlock</div>
<div class="a t" style="left:36.5px;top:560px;font-size:9.5px;color:#ffffff;letter-spacing:-0.041px;font-weight:normal;font-family:'Liberation Sans',sans-serif;">Error List</div>
<div class="a t" style="left:84px;top:560px;font-size:9.5px;color:#ffffff;letter-spacing:-0.05px;font-weight:normal;font-family:'Liberation Sans',sans-serif;">Output</div>
<div class="a" style="left:36.5px;top:574px;width:37.0px;height:3.5px;background:#4d6082;"></div>
<div class="a" style="left:83.5px;top:574px;width:30.5px;height:3.5px;background:#4d6082;"></div>
<div class="a" style="left:187px;top:78px;width:104px;height:17px;background:#fff29d;"></div>
<div class="a t" style="left:191px;top:82px;font-size:9.5px;color:#1e1e1e;letter-spacing:-0.006px;font-weight:normal;font-family:'Liberation Sans',sans-serif;">MainPage.xaml</div>
<svg class="a" style="left:264px;top:83px;" width="9" height="9" viewBox="0 0 9 9"><path d="M1 4.5 L3 4.5 M3 2 L3 7 M3 2.5 L7.5 2.5 L7.5 6.5 L3 6.5 M3 5 L7.5 5" stroke="#1e1e1e" stroke-width="1" fill="none"/></svg>
<svg class="a" style="left:278px;top:83px;" width="9" height="9" viewBox="0 0 9 9"><path d="M0.8 0.8 L8.2 8.2 M8.2 0.8 L0.8 8.2" stroke="#1e1e1e" stroke-width="1.2"/></svg>
<div class="a" style="left:291px;top:78px;width:79px;height:16px;background:#334d75;"></div>
<div class="a t" style="left:294px;top:82px;font-size:9.5px;color:#ffffff;letter-spacing:0.068px;font-weight:normal;font-family:'Liberation Sans',sans-serif;">App.g.i.cs</div>
<svg class="a" style="left:723px;top:84.5px;" width="8" height="6" viewBox="0 0 8 6"><path d="M1.4 1.7 L6.6 1.7 L4 4.3 Z" fill="#ffffff"/></svg>
<div class="a" style="left:187px;top:94px;width:545px;height:1.5px;background:#f6eeb0;"></div>
<div class="a" style="left:187px;top:95.5px;width:531px;height:23.0px;background:#cfd6e5;"></div>
<div class="a" style="left:190.3px;top:98px;width:213.9px;height:17px;background:#ffffff;border:1px solid #cdd2dd"></div>
<div class="a t" style="left:194.6px;top:102px;font-size:9.5px;color:#1e1e1e;letter-spacing:-0.075px;font-weight:normal;font-family:'Liberation Sans',sans-serif;">5" Phone (1920 x 1080) 300% scale</div>
<svg class="a" style="left:395px;top:103.5px;" width="8" height="6" viewBox="0 0 8 6"><path d="M1.7999999999999998 1.9 L6.2 1.9 L4 4.1 Z" fill="#1e1e1e"/></svg>
<div class="a" style="left:409.5px;top:99px;width:1.0px;height:15px;background:#a8b0c0;"></div>
<div class="a" style="left:417.6px;top:96.6px;width:19.0px;height:21.0px;background:#eef0f5;"></div>
<svg class="a" style="left:421px;top:101px;" width="13" height="11" viewBox="0 0 13 11"><rect x="0.5" y="0.5" width="12" height="10" fill="#424242"/><rect x="2" y="2" width="9" height="6" fill="#6f6f6f"/></svg>
<div class="a" style="left:438.4px;top:96.6px;width:18.4px;height:21.0px;background:#fff3b8;border:1px solid #f0d878"></div>
<svg class="a" style="left:443px;top:100px;" width="10" height="14" viewBox="0 0 10 14"><rect x="0.5" y="0.5" width="9" height="13" fill="#424242"/><rect x="2" y="2" width="6" height="10" fill="#6f6f6f"/></svg>
<div class="a" style="left:465px;top:99px;width:1px;height:15px;background:#a8b0c0;"></div>
<div class="a t" style="left:471.6px;top:102px;font-size:9.5px;color:#a0a7b6;letter-spacing:-0.083px;font-weight:normal;font-family:'Liberation Sans',sans-serif;">Effective: 640 x 360</div>
<div class="a" style="left:559px;top:99px;width:1px;height:15px;background:#a8b0c0;"></div>
<svg class="a" style="left:569px;top:101px;" width="13" height="13" viewBox="0 0 13 13"><g transform="translate(6.5 6.5)"><circle r="4.2" fill="#1e1e1e"/><rect x="-1" y="-5.8" width="2" height="2.6" fill="#1e1e1e" transform="rotate(0)"/><rect x="-1" y="-5.8" width="2" height="2.6" fill="#1e1e1e" transform="rotate(45)"/><rect x="-1" y="-5.8" width="2" height="2.6" fill="#1e1e1e" transform="rotate(90)"/><rect x="-1" y="-5.8" width="2" height="2.6" fill="#1e1e1e" transform="rotate(135)"/><rect x="-1" y="-5.8" width="2" height="2.6" fill="#1e1e1e" transform="rotate(180)"/><rect x="-1" y="-5.8" width="2" height="2.6" fill="#1e1e1e" transform="rotate(225)"/><rect x="-1" y="-5.8" width="2" height="2.6" fill="#1e1e1e" transform="rotate(270)"/><rect x="-1" y="-5.8" width="2" height="2.6" fill="#1e1e1e" transform="rotate(315)"/><circle r="2.2" fill="#e4e6ec"/><circle r="0.9" fill="#1e1e1e"/></g></svg>
<div class="a" style="left:187px;top:118.5px;width:531px;height:264.9px;background:repeating-conic-gradient(#eeeeee 0 25%,#f7f7f7 0 50%) 0 0/12.8px 12.8px"></div>
<div class="a" style="left:718px;top:95.5px;width:13.5px;height:287.9px;background:#ebebef;"></div>
<div class="a" style="left:720.5px;top:209.6px;width:8.0px;height:58.4px;background:#d6d7dc;"></div>
<svg class="a" style="left:721px;top:98.5px;" width="8" height="6" viewBox="0 0 8 6"><path d="M1 4.5 L7 4.5 L4 1.5 Z" fill="#868999"/></svg>
<svg class="a" style="left:721px;top:373px;" width="8" height="6" viewBox="0 0 8 6"><path d="M1 1.5 L7 1.5 L4 4.5 Z" fill="#868999"/></svg>
<div class="a" style="left:350px;top:121.6px;width:147px;height:259.9px;background:#ffffff;border:1px solid #c9ccd4"></div>
<div class="a" style="left:350px;top:137.5px;width:147px;height:244.0px;background:transparent;border:1px solid #8aa3cf"></div>
<div class="a" style="left:351px;top:122.6px;width:19px;height:15.4px;background:#f0f0f0;"></div>
<svg class="a" style="left:355px;top:127px;" width="10" height="8" viewBox="0 0 10 8"><path d="M1 1 L9 1 M1 4 L9 4 M1 7 L9 7" stroke="#7a7a7a" stroke-width="1.3"/></svg>
<div class="a" style="left:370px;top:122.6px;width:126px;height:15.4px;background:linear-gradient(90deg,#9c1a60,#c8205a 45%,#fa2a4e)"></div>
<div class="a t" style="left:375.6px;top:125px;font-size:12px;color:#f7e4ee;letter-spacing:0.181px;font-weight:bold;font-family:'Liberation Sans',sans-serif;">Fabrikam</div>
<div class="a" style="left:350.5px;top:138px;width:146.0px;height:0.8px;background:#8aa3cf;"></div>
<div class="a" style="left:348px;top:136px;width:4px;height:4px;background:#ffffff;border:1px solid #8aa3cf"></div>
<div class="a" style="left:494.5px;top:136px;width:4.0px;height:4px;background:#ffffff;border:1px solid #8aa3cf"></div>
<svg class="a" style="left:420px;top:137px;" width="8" height="8" viewBox="0 0 8 8"><rect x="1.5" y="1" width="5" height="6" rx="1.5" fill="#2a2a2a"/><rect x="3" y="2.5" width="2" height="3" fill="#d0d0d0"/></svg>
<svg class="a" style="left:345px;top:256px;" width="10" height="7" viewBox="0 0 10 7"><rect x="1" y="1" width="8" height="5" rx="2" fill="#fff" stroke="#2a2a2a" stroke-width="1.4"/></svg>
<svg class="a" style="left:492px;top:256px;" width="10" height="7" viewBox="0 0 10 7"><rect x="1" y="1" width="8" height="5" rx="2" fill="#fff" stroke="#2a2a2a" stroke-width="1.4"/></svg>
<svg class="a" style="left:420px;top:376px;" width="8" height="8" viewBox="0 0 8 8"><path d="M1.5 6 L1.5 3.5 Q4 0.5 6.5 3.5 L6.5 6" stroke="#2a2a2a" stroke-width="1.4" fill="none"/></svg>
<svg class="a" style="left:420.5px;top:256px;" width="7" height="7" viewBox="0 0 7 7"><circle cx="3.5" cy="3.5" r="2.3" fill="none" stroke="#8aa8d8" stroke-width="1"/></svg>
<div class="a" style="left:187px;top:383.4px;width:544.5px;height:13.6px;background:#e8e8ec;"></div>
<div class="a" style="left:188.7px;top:383.4px;width:49.2px;height:13.3px;background:#ffffff;border:1px solid #c8ccd6"></div>
<div class="a t" style="left:193px;top:386px;font-size:9.5px;color:#1e1e1e;letter-spacing:-0.103px;font-weight:normal;font-family:'Liberation Sans',sans-serif;">16.67%</div>
<svg class="a" style="left:229px;top:387px;" width="8" height="6" viewBox="0 0 8 6"><path d="M1.7999999999999998 1.9 L6.2 1.9 L4 4.1 Z" fill="#1e1e1e"/></svg>
<svg class="a" style="left:241px;top:386px;" width="13" height="9" viewBox="0 0 13 9"><rect x="0.5" y="0.5" width="3.4" height="3.4" fill="#2a2a2a"/><rect x="0.5" y="4.7" width="3.4" height="3.4" fill="#2a2a2a"/><rect x="4.7" y="0.5" width="3.4" height="3.4" fill="#2a2a2a"/><rect x="4.7" y="4.7" width="3.4" height="3.4" fill="#2a2a2a"/><rect x="8.9" y="0.5" width="3.4" height="3.4" fill="#2a2a2a"/><rect x="8.9" y="4.7" width="3.4" height="3.4" fill="#2a2a2a"/></svg>
<svg class="a" style="left:260px;top:386px;" width="13" height="9" viewBox="0 0 13 9"><rect x="0.5" y="0.5" width="3.4" height="3.4" fill="none" stroke="#2a2a2a" stroke-width="1"/><rect x="0.5" y="4.7" width="3.4" height="3.4" fill="none" stroke="#2a2a2a" stroke-width="1"/><rect x="4.7" y="0.5" width="3.4" height="3.4" fill="none" stroke="#2a2a2a" stroke-width="1"/><rect x="4.7" y="4.7" width="3.4" height="3.4" fill="none" stroke="#2a2a2a" stroke-width="1"/><rect x="8.9" y="0.5" width="3.4" height="3.4" fill="none" stroke="#2a2a2a" stroke-width="1"/><rect x="8.9" y="4.7" width="3.4" height="3.4" fill="none" stroke="#2a2a2a" stroke-width="1"/></svg>
<div class="a" style="left:276.2px;top:383.4px;width:17.8px;height:13.3px;background:#fff3b8;border:1px solid #f0d878"></div>
<svg class="a" style="left:279px;top:384.5px;" width="12" height="11" viewBox="0 0 12 11"><circle cx="6" cy="5.5" r="2.3" fill="none" stroke="#1e1e1e" stroke-width="1.2"/><path d="M6 0.5 L6 3 M6 8 L6 10.5 M0.5 5.5 L3.5 5.5 M8.5 5.5 L11.5 5.5" stroke="#1e1e1e" stroke-width="1.2"/></svg>
<svg class="a" style="left:298px;top:386px;" width="6" height="8" viewBox="0 0 6 8"><path d="M4.5 1 L4.5 7 L1.5 4 Z" fill="#868999"/></svg>
<div class="a" style="left:415px;top:385.5px;width:205px;height:8.0px;background:#d6d7dc;"></div>
<svg class="a" style="left:707.4px;top:386px;" width="6" height="8" viewBox="0 0 6 8"><path d="M1.5 1 L1.5 7 L4.5 4 Z" fill="#868999"/></svg>
<div class="a" style="left:187px;top:397px;width:544.5px;height:18.5px;background:#eeeef2;"></div>
<svg class="a" style="left:188px;top:397px" width="80" height="18" viewBox="0 0 80 18"><path d="M0 0 L62 0 L72 18 L0 18 Z" fill="#f6f6f8"/></svg>
<svg class="a" style="left:199.5px;top:400px;" width="9" height="10" viewBox="0 0 9 10"><path d="M7.5 3.5 L7.5 0.8 L0.8 0.8 L0.8 8 L3.5 8" stroke="#424242" stroke-width="1.1" fill="none"/><circle cx="6.5" cy="7.2" r="2.2" fill="#424242"/></svg>
<div class="a t" style="left:210.9px;top:401px;font-size:9.5px;color:#1e1e1e;letter-spacing:-0.129px;font-weight:normal;font-family:'Liberation Sans',sans-serif;">Design</div>
<svg class="a" style="left:262.5px;top:400px;" width="9" height="10" viewBox="0 0 9 10"><path d="M2.5 9.5 L2.5 1 M0.5 3 L2.5 0.8 L4.5 3 M6.5 0.5 L6.5 9 M4.5 7 L6.5 9.2 L8.5 7" stroke="#1e1e1e" stroke-width="1.2" fill="none"/></svg>
<svg class="a" style="left:293px;top:402.5px;" width="8" height="9" viewBox="0 0 8 9"><rect x="0.5" y="0.5" width="7" height="8" fill="none" stroke="#424242" stroke-width="1"/><rect x="2.8" y="3" width="2.4" height="3" fill="#424242"/></svg>
<div class="a t" style="left:304px;top:403px;font-size:9.5px;color:#1e1e1e;letter-spacing:-0.267px;font-weight:normal;font-family:'Liberation Sans',sans-serif;">XAML</div>
<svg class="a" style="left:694px;top:400.5px;" width="36" height="12" viewBox="0 0 36 12"><rect x="1" y="1" width="9.5" height="9.5" fill="#fff" stroke="#424242" stroke-width="1"/><path d="M5.75 1 L5.75 10.5" stroke="#424242"/><rect x="12" y="0.5" width="11" height="11" fill="#dfe6f2" stroke="#7ba0d0" stroke-width="1"/><rect x="13" y="1.5" width="9" height="9" fill="#fff" stroke="#424242" stroke-width="1"/><path d="M13 6 L22 6" stroke="#424242" stroke-width="1.2"/><rect x="24.5" y="1" width="9.5" height="9.5" fill="#fff" stroke="#424242" stroke-width="1"/><path d="M27 3 L29.25 5 L31.5 3 M27 6 L29.25 8 L31.5 6" stroke="#424242" stroke-width="1" fill="none"/></svg>
<div class="a" style="left:187px;top:415.5px;width:544.5px;height:16.0px;background:#f6f6f8;"></div>
<div class="a" style="left:188px;top:416px;width:267px;height:15px;background:#ffffff;"></div>
<div class="a" style="left:458px;top:416px;width:273px;height:15px;background:#ffffff;"></div>
<div class="a" style="left:455.5px;top:415.5px;width:3.0px;height:16.0px;background:#c9cfdb;"></div>
<svg class="a" style="left:190.5px;top:419px;" width="12" height="8" viewBox="0 0 12 8"><rect x="0.5" y="0.5" width="11" height="7" fill="none" stroke="#424242" stroke-width="1"/><path d="M3 2.5 L2 4 L3 5.5 M9 2.5 L10 4 L9 5.5" stroke="#424242" stroke-width="0.9" fill="none"/></svg>
<div class="a t" style="left:205px;top:419px;font-size:9.5px;color:#1e1e1e;letter-spacing:0.045px;font-weight:normal;font-family:'Liberation Sans',sans-serif;">Frame (MainContentFrame)</div>
<svg class="a" style="left:448.5px;top:421px;" width="8" height="6" viewBox="0 0 8 6"><path d="M1.7999999999999998 1.9 L6.2 1.9 L4 4.1 Z" fill="#1e1e1e"/></svg>
<svg class="a" style="left:463.5px;top:419px;" width="12" height="8" viewBox="0 0 12 8"><rect x="0.5" y="0.5" width="11" height="7" fill="none" stroke="#424242" stroke-width="1"/><path d="M3 2.5 L2 4 L3 5.5 M9 2.5 L10 4 L9 5.5" stroke="#424242" stroke-width="0.9" fill="none"/></svg>
<div class="a t" style="left:477.9px;top:419px;font-size:9.5px;color:#1e1e1e;letter-spacing:0.045px;font-weight:normal;font-family:'Liberation Sans',sans-serif;">Frame (MainContentFrame)</div>
<svg class="a" style="left:722.4px;top:421px;" width="8" height="6" viewBox="0 0 8 6"><path d="M1.7999999999999998 1.9 L6.2 1.9 L4 4.1 Z" fill="#1e1e1e"/></svg>
<div class="a" style="left:187px;top:431px;width:544.5px;height:1px;background:#c9cfdb;"></div>
<div class="a" style="left:187px;top:432px;width:531px;height:106.3px;background:#ffffff;"></div>
<div class="a" style="left:188px;top:432px;width:14px;height:106.3px;background:#e6e7ea;"></div>
<div class="a" style="left:214px;top:432px;width:1px;height:106.3px;background:#b4b4b4;"></div>
<div class="a" style="left:215px;top:434px;width:3px;height:1px;background:#b4b4b4;"></div>
<div class="a" style="left:215px;top:448px;width:3px;height:1px;background:#b4b4b4;"></div>
<div class="a" style="left:215px;top:506px;width:3px;height:1px;background:#b4b4b4;"></div>
<div class="a" style="left:215px;top:520px;width:3px;height:1px;background:#b4b4b4;"></div>
<div class="a" style="left:215px;top:534px;width:3px;height:1px;background:#b4b4b4;"></div>
<div class="a" style="left:346.6px;top:478px;width:30.4px;height:14px;background:#e5e5e5;"></div>
<div class="a t" style="left:340.8px;top:437px;font-size:10px;color:#2030b0;letter-spacing:0px;font-weight:normal;font-family:'Liberation Mono',monospace;letter-spacing:0.04px">&lt;/</div>
<div class="a t" style="left:352.88px;top:437px;font-size:10px;color:#a02030;letter-spacing:0px;font-weight:normal;font-family:'Liberation Mono',monospace;letter-spacing:0.04px">Grid</div>
<div class="a t" style="left:377.04px;top:437px;font-size:10px;color:#2030b0;letter-spacing:0px;font-weight:normal;font-family:'Liberation Mono',monospace;letter-spacing:0.04px">&gt;</div>
<div class="a t" style="left:341px;top:481px;font-size:10px;color:#2030b0;letter-spacing:0px;font-weight:normal;font-family:'Liberation Mono',monospace;letter-spacing:0.04px">&lt;</div>
<div class="a t" style="left:347.04px;top:481px;font-size:10px;color:#a02030;letter-spacing:0px;font-weight:normal;font-family:'Liberation Mono',monospace;letter-spacing:0.04px">Frame</div>
<div class="a t" style="left:377.24px;top:481px;font-size:10px;color:#2030b0;letter-spacing:0px;font-weight:normal;font-family:'Liberation Mono',monospace;letter-spacing:0.04px"> </div>
<div class="a t" style="left:383.28px;top:481px;font-size:10px;color:#d03030;letter-spacing:0px;font-weight:normal;font-family:'Liberation Mono',monospace;letter-spacing:0.04px">x:Name</div>
<div class="a t" style="left:419.52px;top:481px;font-size:10px;color:#2030b0;letter-spacing:0px;font-weight:normal;font-family:'Liberation Mono',monospace;letter-spacing:0.04px">=</div>
<div class="a t" style="left:425.56px;top:481px;font-size:10px;color:#2030b0;letter-spacing:0px;font-weight:normal;font-family:'Liberation Mono',monospace;letter-spacing:0.04px">"MainContentFrame"</div>
<div class="a t" style="left:534.28px;top:481px;font-size:10px;color:#2030b0;letter-spacing:0px;font-weight:normal;font-family:'Liberation Mono',monospace;letter-spacing:0.04px"> </div>
<div class="a t" style="left:540.32px;top:481px;font-size:10px;color:#d03030;letter-spacing:0px;font-weight:normal;font-family:'Liberation Mono',monospace;letter-spacing:0.04px">RelativePanel.Below</div>
<div class="a t" style="left:655.08px;top:481px;font-size:10px;color:#2030b0;letter-spacing:0px;font-weight:normal;font-family:'Liberation Mono',monospace;letter-spacing:0.04px">=</div>
<div class="a t" style="left:661.12px;top:481px;font-size:10px;color:#2030b0;letter-spacing:0px;font-weight:normal;font-family:'Liberation Mono',monospace;letter-spacing:0.04px">"ClientSt</div>
<div class="a t" style="left:317.4px;top:495px;font-size:10px;color:#2030b0;letter-spacing:0px;font-weight:normal;font-family:'Liberation Mono',monospace;letter-spacing:0.04px">&lt;/</div>
<div class="a t" style="left:329.48px;top:495px;font-size:10px;color:#a02030;letter-spacing:0px;font-weight:normal;font-family:'Liberation Mono',monospace;letter-spacing:0.04px">RelativePanel</div>
<div class="a t" style="left:408.0px;top:495px;font-size:10px;color:#2030b0;letter-spacing:0px;font-weight:normal;font-family:'Liberation Mono',monospace;letter-spacing:0.04px">&gt;</div>
<div class="a t" style="left:292.8px;top:509px;font-size:10px;color:#2030b0;letter-spacing:0px;font-weight:normal;font-family:'Liberation Mono',monospace;letter-spacing:0.04px">&lt;/</div>
<div class="a t" style="left:304.88px;top:509px;font-size:10px;color:#a02030;letter-spacing:0px;font-weight:normal;font-family:'Liberation Mono',monospace;letter-spacing:0.04px">SplitView.Content</div>
<div class="a t" style="left:407.56px;top:509px;font-size:10px;color:#2030b0;letter-spacing:0px;font-weight:normal;font-family:'Liberation Mono',monospace;letter-spacing:0.04px">&gt;</div>
<div class="a t" style="left:268.9px;top:524px;font-size:10px;color:#2030b0;letter-spacing:0px;font-weight:normal;font-family:'Liberation Mono',monospace;letter-spacing:0.04px">&lt;/</div>
<div class="a t" style="left:280.98px;top:524px;font-size:10px;color:#a02030;letter-spacing:0px;font-weight:normal;font-family:'Liberation Mono',monospace;letter-spacing:0.04px">SplitView</div>
<div class="a t" style="left:335.34px;top:524px;font-size:10px;color:#2030b0;letter-spacing:0px;font-weight:normal;font-family:'Liberation Mono',monospace;letter-spacing:0.04px">&gt;</div>
<div class="a" style="left:716px;top:432px;width:2px;height:106.3px;background:#ffffff;"></div>
<div class="a" style="left:717.7px;top:432px;width:13.8px;height:106.3px;background:#e8e8ec;"></div>
<div class="a" style="left:717.7px;top:432px;width:13.8px;height:14px;background:#f4f4f6;"></div>
<svg class="a" style="left:719px;top:434px;" width="12" height="11" viewBox="0 0 12 11"><path d="M6 0.5 L6 10.5 M1 5 L11 5 M1 6.5 L11 6.5 M3.5 2.5 L6 0.5 L8.5 2.5 M3.5 8.5 L6 10.5 L8.5 8.5" stroke="#1e1e1e" stroke-width="1" fill="none"/></svg>
<svg class="a" style="left:721px;top:449.7px;" width="8" height="6" viewBox="0 0 8 6"><path d="M1 4.5 L7 4.5 L4 1.5 Z" fill="#868999"/></svg>
<svg class="a" style="left:721px;top:528px;" width="8" height="6" viewBox="0 0 8 6"><path d="M1 1.5 L7 1.5 L4 4.5 Z" fill="#868999"/></svg>
<div class="a" style="left:717.7px;top:512px;width:13.8px;height:2px;background:#1e1e8c;"></div>
<div class="a" style="left:187px;top:538.3px;width:544.5px;height:12.7px;background:#e8e8ec;"></div>
<div class="a" style="left:188px;top:538.3px;width:47.6px;height:12.7px;background:#ffffff;"></div>
<div class="a t" style="left:190.25px;top:540px;font-size:9.5px;color:#1e1e1e;letter-spacing:-0.267px;font-weight:normal;font-family:'Liberation Sans',sans-serif;">105 %</div>
<svg class="a" style="left:227px;top:542px;" width="8" height="6" viewBox="0 0 8 6"><path d="M1.7999999999999998 1.9 L6.2 1.9 L4 4.1 Z" fill="#1e1e1e"/></svg>
<svg class="a" style="left:240.4px;top:540.7px;" width="6" height="8" viewBox="0 0 6 8"><path d="M4.5 1 L4.5 7 L1.5 4 Z" fill="#868999"/></svg>
<div class="a" style="left:250px;top:541px;width:152px;height:8px;background:#d6d7dc;"></div>
<svg class="a" style="left:707.4px;top:540.7px;" width="6" height="8" viewBox="0 0 6 8"><path d="M1.5 1 L1.5 7 L4.5 4 Z" fill="#868999"/></svg>
<div class="a" style="left:737.5px;top:78px;width:271.0px;height:18px;background:#4d6082;"></div>
<div class="a t" style="left:741.1px;top:83px;font-size:9.5px;color:#ffffff;letter-spacing:-0.003px;font-weight:normal;font-family:'Liberation Sans',sans-serif;">Solution Explorer</div>
<svg class="a" style="left:968.5px;top:84.5px;" width="8" height="6" viewBox="0 0 8 6"><path d="M1.4 1.7 L6.6 1.7 L4 4.3 Z" fill="#ffffff"/></svg>
<svg class="a" style="left:981.5px;top:82px;" width="9" height="11" viewBox="0 0 9 11"><path d="M2 0.5 L7 0.5 M2.5 0.5 L2.5 6 M6.5 0.5 L6.5 6 M1 6 L8 6 M4.5 6 L4.5 10.5" stroke="#ffffff" stroke-width="1.1" fill="none"/></svg>
<svg class="a" style="left:994.5px;top:83px;" width="9" height="9" viewBox="0 0 9 9"><path d="M0.8 0.8 L8.2 8.2 M8.2 0.8 L0.8 8.2" stroke="#ffffff" stroke-width="1.2"/></svg>
<div class="a" style="left:737.5px;top:96px;width:271.0px;height:23px;background:#cfd6e5;"></div>
<svg class="a" style="left:745px;top:102px;" width="11" height="11" viewBox="0 0 11 11"><circle cx="5.5" cy="5.5" r="4.8" fill="#bcc1cb"/><path d="M8 5.5 L3.2 5.5 M5.2 3.5 L3.2 5.5 L5.2 7.5" stroke="#dde1e9" stroke-width="1.4" fill="none"/></svg>
<svg class="a" style="left:762px;top:102px;" width="11" height="11" viewBox="0 0 11 11"><circle cx="5.5" cy="5.5" r="4.8" fill="#bcc1cb"/><path d="M3 5.5 L7.8 5.5 M5.8 3.5 L7.8 5.5 L5.8 7.5" stroke="#dde1e9" stroke-width="1.4" fill="none"/></svg>
<svg class="a" style="left:778.5px;top:101px;" width="13" height="13" viewBox="0 0 13 13"><path d="M1 6.5 L6.5 1.2 L12 6.5" stroke="#1e1e1e" stroke-width="1.4" fill="none"/><path d="M2.8 5.5 L2.8 12 L10.2 12 L10.2 5.5" stroke="#1e1e1e" stroke-width="1.3" fill="none"/><rect x="5.3" y="8" width="2.4" height="4" fill="#1e1e1e"/><rect x="9" y="1.5" width="1.6" height="3" fill="#1e1e1e"/></svg>
<div class="a" style="left:797px;top:99px;width:1px;height:17px;background:#a8b0c0;"></div>
<svg class="a" style="left:805px;top:100px;" width="13" height="14" viewBox="0 0 13 14"><path d="M1.5 0.5 L1.5 3 M0 1.5 L3 1.5" stroke="#1e1e1e" stroke-width="0.9"/><circle cx="7.5" cy="8" r="4.2" fill="none" stroke="#1e1e1e" stroke-width="1.3"/><path d="M7.5 5.5 L7.5 8.3 L9.5 8.3" stroke="#1e1e1e" stroke-width="1.1" fill="none"/></svg>
<svg class="a" style="left:820px;top:104.5px;" width="8" height="6" viewBox="0 0 8 6"><path d="M1.7999999999999998 1.9 L6.2 1.9 L4 4.1 Z" fill="#1e1e1e"/></svg>
<svg class="a" style="left:832px;top:102px;" width="12" height="11" viewBox="0 0 12 11"><path d="M11 3 L2 3 M4 0.8 L1.5 3 L4 5.2 M1 8 L10 8 M8 5.8 L10.5 8 L8 10.2" stroke="#1e1e1e" stroke-width="1.4" fill="none"/></svg>
<svg class="a" style="left:849px;top:101px;" width="12" height="13" viewBox="0 0 12 13"><path d="M9.5 4 A4.5 4.5 0 1 0 10 8" stroke="#1e5aa8" stroke-width="2" fill="none"/><path d="M7 1 L11 1.5 L10.2 5.5 Z" fill="#1e5aa8"/></svg>
<svg class="a" style="left:868px;top:101px;" width="11" height="12" viewBox="0 0 11 12"><rect x="0.8" y="4.5" width="6.5" height="6.5" fill="none" stroke="#424242" stroke-width="1.2"/><path d="M3 4.5 L3 2.5 L9.5 2.5 L9.5 9 L7.3 9 M5 2.5 L5 0.8 L10.5 0.8" stroke="#424242" stroke-width="1.1" fill="none"/><path d="M2.5 7.7 L5.5 7.7" stroke="#424242" stroke-width="1"/></svg>
<svg class="a" style="left:885px;top:100px;" width="12" height="14" viewBox="0 0 12 14"><path d="M0.8 1 L0.8 10 M0.8 1 L6 1" stroke="#6a6a6a" stroke-width="1" fill="none"/><rect x="3" y="3" width="6" height="9" fill="#fff" stroke="#424242" stroke-width="1.1"/><rect x="5.5" y="5" width="6" height="8.5" fill="#fff" stroke="#424242" stroke-width="1.1"/><path d="M7 8 L10 8 M7 10 L10 10" stroke="#424242"/></svg>
<div class="a" style="left:902px;top:99px;width:1px;height:17px;background:#a8b0c0;"></div>
<svg class="a" style="left:910px;top:103px;" width="11" height="9" viewBox="0 0 11 9"><path d="M3.5 1 L0.8 4.5 L3.5 8 M7.5 1 L10.2 4.5 L7.5 8" stroke="#1e1e1e" stroke-width="1.5" fill="none"/></svg>
<svg class="a" style="left:926.5px;top:101px;" width="12" height="13" viewBox="0 0 12 13"><path d="M2 11.5 L7 6.5" stroke="#1e1e1e" stroke-width="2.6" stroke-linecap="round"/><path d="M6 4.5 Q6 1 9.5 1 L8 3 L9 4.5 L11 3.3 Q11 7 7.2 7 Z" fill="#1e1e1e"/></svg>
<div class="a" style="left:942.5px;top:97.9px;width:16.7px;height:18.7px;background:#fff3b8;border:1px solid #f3dc86"></div>
<svg class="a" style="left:945px;top:104px;" width="12" height="5" viewBox="0 0 12 5"><rect x="0" y="2" width="12" height="1.5" fill="#1e1e1e"/><rect x="5" y="0" width="7" height="3.5" fill="#1e1e1e"/></svg>
<div class="a" style="left:737.5px;top:119px;width:271.0px;height:16.6px;background:#ffffff;"></div>
<div class="a t" style="left:741.5px;top:122px;font-size:9.5px;color:#717171;letter-spacing:-0.04px;font-weight:normal;font-family:'Liberation Sans',sans-serif;">Search Solution Explorer (Ctrl+ş)</div>
<svg class="a" style="left:985px;top:120.5px;" width="12" height="12" viewBox="0 0 12 12"><circle cx="7" cy="4.8" r="3.3" stroke="#424242" stroke-width="1.5" fill="none"/><path d="M4.6 7.2 L1.5 10.5" stroke="#424242" stroke-width="2" stroke-linecap="round"/></svg>
<svg class="a" style="left:998.5px;top:124.5px;" width="8" height="6" viewBox="0 0 8 6"><path d="M1.7999999999999998 1.9 L6.2 1.9 L4 4.1 Z" fill="#717171"/></svg>
<div class="a" style="left:737.5px;top:135.6px;width:271.0px;height:231.4px;background:#ffffff;"></div>
<div class="a" style="left:737.5px;top:269.5px;width:271.0px;height:15.2px;background:#ccd3e2;"></div>
<svg class="a" style="left:747px;top:140.1px;" width="14" height="12" viewBox="0 0 14 12"><path d="M3 9.5 L3 1 L12.5 1 L12.5 9.5 L10 9.5" fill="none" stroke="#424242" stroke-width="1"/><rect x="3" y="0.5" width="9.5" height="1.8" fill="#424242"/><path d="M1 8.8 Q2.5 7 4 8.8 Q5.5 10.6 7 8.8 Q5.5 7 4 8.8 Q2.5 10.6 1 8.8 Z" fill="none" stroke="#68217a" stroke-width="1.3"/><path d="M7.5 10.6 L10 10.6" stroke="#424242" stroke-width="1"/></svg>
<div class="a t" style="left:764.5px;top:142px;font-size:9.5px;color:#1e1e1e;letter-spacing:-0.041px;font-weight:normal;font-family:'Liberation Sans',sans-serif;">Solution 'InteriorDesign' (1 project)</div>
<svg class="a" style="left:745.5px;top:157.6px;" width="7" height="7" viewBox="0 0 7 7"><path d="M0.8 5.5 L5.5 5.5 L5.5 0.8 Z" fill="#1e1e1e"/></svg>
<svg class="a" style="left:762.5px;top:155.6px;" width="12" height="10" viewBox="0 0 12 10"><rect x="0.6" y="0.6" width="10.6" height="8.8" fill="#fff" stroke="#6aa86a" stroke-width="1.1"/><text x="1.6" y="7.6" font-size="6.5" font-family="Liberation Sans" fill="#3a5a3a">C#</text></svg>
<div class="a t" style="left:779px;top:156px;font-size:9.5px;color:#1e1e1e;letter-spacing:-0.099px;font-weight:bold;font-family:'Liberation Sans',sans-serif;">InteriorDesign (Universal Windows)</div>
<svg class="a" style="left:760px;top:171.1px;" width="7" height="9" viewBox="0 0 7 9"><path d="M1.5 1.2 L5 4.4 L1.5 7.6 Z" fill="none" stroke="#1e1e1e" stroke-width="1.1"/></svg>
<svg class="a" style="left:777px;top:169.1px;" width="12" height="12" viewBox="0 0 12 12"><path d="M2 10.5 L6.5 6" stroke="#1e1e1e" stroke-width="2.4" stroke-linecap="round"/><path d="M5.5 4 Q5.5 0.8 9 0.8 L7.6 2.8 L8.5 4 L10.8 3 Q10.8 6.6 7 6.6 Z" fill="#1e1e1e"/></svg>
<div class="a t" style="left:793.8px;top:171px;font-size:9.5px;color:#1e1e1e;letter-spacing:-0.046px;font-weight:normal;font-family:'Liberation Sans',sans-serif;">Properties</div>
<svg class="a" style="left:760px;top:185.6px;" width="7" height="9" viewBox="0 0 7 9"><path d="M1.5 1.2 L5 4.4 L1.5 7.6 Z" fill="none" stroke="#1e1e1e" stroke-width="1.1"/></svg>
<svg class="a" style="left:778px;top:186.6px;" width="13" height="6" viewBox="0 0 13 6"><rect x="0.5" y="1.5" width="2.5" height="2.5" fill="#1e1e1e"/><path d="M3 2.75 L6 2.75" stroke="#1e1e1e" stroke-width="1"/><rect x="6.5" y="0.5" width="5" height="4.5" fill="#1e1e1e"/></svg>
<div class="a t" style="left:793.8px;top:185px;font-size:9.5px;color:#1e1e1e;letter-spacing:-0.051px;font-weight:normal;font-family:'Liberation Sans',sans-serif;">References</div>
<svg class="a" style="left:760px;top:200.1px;" width="7" height="9" viewBox="0 0 7 9"><path d="M1.5 1.2 L5 4.4 L1.5 7.6 Z" fill="none" stroke="#1e1e1e" stroke-width="1.1"/></svg>
<svg class="a" style="left:778px;top:199.1px;" width="13" height="10" viewBox="0 0 13 10"><path d="M0.5 1 L4.5 1 L5.5 2.5 L12.5 2.5 L12.5 9.5 L0.5 9.5 Z" fill="#dcb67a"/><rect x="0.5" y="3.5" width="12" height="1" fill="#e8c994"/></svg>
<div class="a t" style="left:793.8px;top:200px;font-size:9.5px;color:#1e1e1e;letter-spacing:-0.05px;font-weight:normal;font-family:'Liberation Sans',sans-serif;">Assets</div>
<svg class="a" style="left:760px;top:214.6px;" width="7" height="9" viewBox="0 0 7 9"><path d="M1.5 1.2 L5 4.4 L1.5 7.6 Z" fill="none" stroke="#1e1e1e" stroke-width="1.1"/></svg>
<svg class="a" style="left:778px;top:213.6px;" width="13" height="10" viewBox="0 0 13 10"><path d="M0.5 1 L4.5 1 L5.5 2.5 L12.5 2.5 L12.5 9.5 L0.5 9.5 Z" fill="#dcb67a"/><rect x="0.5" y="3.5" width="12" height="1" fill="#e8c994"/></svg>
<div class="a t" style="left:793.8px;top:214px;font-size:9.5px;color:#1e1e1e;letter-spacing:-0.054px;font-weight:normal;font-family:'Liberation Sans',sans-serif;">Model</div>
<svg class="a" style="left:760px;top:229.1px;" width="7" height="9" viewBox="0 0 7 9"><path d="M1.5 1.2 L5 4.4 L1.5 7.6 Z" fill="none" stroke="#1e1e1e" stroke-width="1.1"/></svg>
<svg class="a" style="left:778px;top:228.1px;" width="13" height="10" viewBox="0 0 13 10"><path d="M0.5 1 L4.5 1 L5.5 2.5 L12.5 2.5 L12.5 9.5 L0.5 9.5 Z" fill="#dcb67a"/><rect x="0.5" y="3.5" width="12" height="1" fill="#e8c994"/></svg>
<div class="a t" style="left:793.8px;top:229px;font-size:9.5px;color:#1e1e1e;letter-spacing:-0.053px;font-weight:normal;font-family:'Liberation Sans',sans-serif;">Views</div>
<svg class="a" style="left:760px;top:243.6px;" width="7" height="9" viewBox="0 0 7 9"><path d="M1.5 1.2 L5 4.4 L1.5 7.6 Z" fill="none" stroke="#1e1e1e" stroke-width="1.1"/></svg>
<svg class="a" style="left:778px;top:240.6px;" width="12" height="14" viewBox="0 0 12 14"><path d="M3 1 L8 1 L10.5 3.5 L10.5 11 L3 11 Z" fill="#fff" stroke="#424242" stroke-width="1"/><path d="M8 1 L8 3.5 L10.5 3.5" fill="none" stroke="#424242" stroke-width="0.9"/><rect x="0.5" y="8.5" width="7" height="4.5" fill="#fff"/><path d="M2 9.5 L1 10.7 L2 12 M6 9.5 L7 10.7 L6 12" stroke="#1c7fcf" stroke-width="0.9" fill="none"/><path d="M3 10.7 L5 10.7" stroke="#1c7fcf" stroke-width="0.9"/></svg>
<div class="a t" style="left:793.8px;top:243px;font-size:9.5px;color:#1e1e1e;letter-spacing:-0.052px;font-weight:normal;font-family:'Liberation Sans',sans-serif;">App.xaml</div>
<svg class="a" style="left:778px;top:256.1px;" width="13" height="13" viewBox="0 0 13 13"><rect x="2" y="1" width="10" height="8" fill="#fff" stroke="#424242" stroke-width="1.1"/><path d="M4 3.5 L10 3.5 M4 5.5 L10 5.5" stroke="#424242" stroke-width="0.9"/><path d="M1 12.5 L1 8 M1 10.5 L3 10.5" stroke="#424242" stroke-width="1.1"/></svg>
<div class="a t" style="left:793.8px;top:258px;font-size:9.5px;color:#1e1e1e;letter-spacing:-0.048px;font-weight:normal;font-family:'Liberation Sans',sans-serif;">InteriorDesign_TemporaryKey.pfx</div>
<svg class="a" style="left:760px;top:272.6px;" width="7" height="9" viewBox="0 0 7 9"><path d="M1.5 1.2 L5 4.4 L1.5 7.6 Z" fill="none" stroke="#1e1e1e" stroke-width="1.1"/></svg>
<svg class="a" style="left:778px;top:269.6px;" width="12" height="14" viewBox="0 0 12 14"><path d="M3 1 L8 1 L10.5 3.5 L10.5 11 L3 11 Z" fill="#fff" stroke="#424242" stroke-width="1"/><path d="M8 1 L8 3.5 L10.5 3.5" fill="none" stroke="#424242" stroke-width="0.9"/><rect x="0.5" y="8.5" width="7" height="4.5" fill="#fff"/><path d="M2 9.5 L1 10.7 L2 12 M6 9.5 L7 10.7 L6 12" stroke="#1c7fcf" stroke-width="0.9" fill="none"/><path d="M3 10.7 L5 10.7" stroke="#1c7fcf" stroke-width="0.9"/></svg>
<div class="a t" style="left:793.8px;top:272px;font-size:9.5px;color:#1e1e1e;letter-spacing:-0.053px;font-weight:normal;font-family:'Liberation Sans',sans-serif;">MainPage.xaml</div>
<svg class="a" style="left:778px;top:285.1px;" width="13" height="13" viewBox="0 0 13 13"><rect x="0.8" y="1.5" width="11.5" height="10.5" fill="#fff" stroke="#424242" stroke-width="1.1"/><rect x="0.8" y="1.5" width="3" height="10.5" fill="#424242"/><path d="M6 5 L10.5 5 M6 7.5 L10.5 7.5 M6 10 L10.5 10" stroke="#424242" stroke-width="0.9"/><path d="M2.3 0.5 L2.3 3" stroke="#424242" stroke-width="1"/></svg>
<div class="a t" style="left:793.8px;top:287px;font-size:9.5px;color:#1e1e1e;letter-spacing:-0.051px;font-weight:normal;font-family:'Liberation Sans',sans-serif;">Package.appxmanifest</div>
<svg class="a" style="left:778px;top:299.6px;" width="12" height="13" viewBox="0 0 12 13"><path d="M4 11.5 L4 1.5 Q4 0.6 5 0.6 L10.5 0.6 M10.5 0.6 Q9.2 0.6 9.2 2 L9.2 10 Q9.2 12 7 12 L2 12 Q0.8 12 0.8 10.5 L0.8 9.5 L4 9.5" stroke="#424242" stroke-width="1.1" fill="none"/></svg>
<div class="a t" style="left:793.8px;top:301px;font-size:9.5px;color:#1e1e1e;letter-spacing:-0.043px;font-weight:normal;font-family:'Liberation Sans',sans-serif;">project.json</div>
<div class="a" style="left:737.5px;top:366.5px;width:79.5px;height:16.0px;background:#ffffff;"></div>
<div class="a t" style="left:741px;top:370px;font-size:9.5px;color:#1e1e1e;letter-spacing:-0.032px;font-weight:normal;font-family:'Liberation Sans',sans-serif;">Solution Explorer</div>
<div class="a" style="left:817px;top:367px;width:69px;height:15.5px;background:#4d6082;"></div>
<div class="a t" style="left:820.5px;top:370px;font-size:9.5px;color:#ffffff;letter-spacing:0.043px;font-weight:normal;font-family:'Liberation Sans',sans-serif;">Team Explorer</div>
<div class="a" style="left:737.5px;top:389px;width:271.0px;height:16.5px;background:#4d6082;"></div>
<div class="a t" style="left:741.6px;top:393px;font-size:9.5px;color:#ffffff;letter-spacing:-0.05px;font-weight:normal;font-family:'Liberation Sans',sans-serif;">Properties</div>
<svg class="a" style="left:968.5px;top:394.5px;" width="8" height="6" viewBox="0 0 8 6"><path d="M1.4 1.7 L6.6 1.7 L4 4.3 Z" fill="#ffffff"/></svg>
<svg class="a" style="left:981.5px;top:392px;" width="9" height="11" viewBox="0 0 9 11"><path d="M2 0.5 L7 0.5 M2.5 0.5 L2.5 6 M6.5 0.5 L6.5 6 M1 6 L8 6 M4.5 6 L4.5 10.5" stroke="#ffffff" stroke-width="1.1" fill="none"/></svg>
<svg class="a" style="left:994.5px;top:393px;" width="9" height="9" viewBox="0 0 9 9"><path d="M0.8 0.8 L8.2 8.2 M8.2 0.8 L0.8 8.2" stroke="#ffffff" stroke-width="1.2"/></svg>
<div class="a" style="left:737.5px;top:405.5px;width:271.0px;height:147.0px;background:#f5f5f5;"></div>
<svg class="a" style="left:748px;top:418.5px;" width="13" height="13" viewBox="0 0 13 13"><path d="M1 5 L6.5 1 L12 5 L12 12 L1 12 Z" fill="none" stroke="#424242" stroke-width="1.2"/></svg>
<div class="a t" style="left:772.1px;top:413px;font-size:9.5px;color:#1e1e1e;letter-spacing:-0.01px;font-weight:normal;font-family:'Liberation Sans',sans-serif;">Name</div>
<div class="a" style="left:801.3px;top:409.6px;width:162.4px;height:13.7px;background:#ffffff;border:1px solid #b8bcc6"></div>
<div class="a t" style="left:804.9px;top:413px;font-size:9.5px;color:#1e1e1e;letter-spacing:-0.032px;font-weight:normal;font-family:'Liberation Sans',sans-serif;">MainContentFrame</div>
<div class="a" style="left:967.4px;top:408px;width:18.3px;height:16.6px;background:#fff3b8;border:1px solid #f0d878"></div>
<svg class="a" style="left:970.5px;top:410.5px;" width="12" height="12" viewBox="0 0 12 12"><path d="M2 10.5 L6.5 6" stroke="#1e1e1e" stroke-width="2.4" stroke-linecap="round"/><path d="M5.5 4 Q5.5 0.8 9 0.8 L7.6 2.8 L8.5 4 L10.8 3 Q10.8 6.6 7 6.6 Z" fill="#1e1e1e"/></svg>
<div class="a" style="left:985.7px;top:408px;width:18.7px;height:16.6px;background:#f2f2f4;border:1px solid #dcdfe6"></div>
<svg class="a" style="left:990.5px;top:411px;" width="9" height="11" viewBox="0 0 9 11"><path d="M5 0.5 L1.5 6 L4.5 6 L3 10.5 L7.5 4.5 L4.5 4.5 L6.5 0.5 Z" fill="#1e1e1e"/></svg>
<div class="a t" style="left:772.1px;top:431px;font-size:9.5px;color:#1e1e1e;letter-spacing:0.301px;font-weight:normal;font-family:'Liberation Sans',sans-serif;">Type</div>
<div class="a t" style="left:804.9px;top:431px;font-size:9.5px;color:#1e1e1e;letter-spacing:-0.129px;font-weight:normal;font-family:'Liberation Sans',sans-serif;">Frame</div>
<div class="a" style="left:741.2px;top:443.5px;width:263.5px;height:14.0px;background:#ffffff;border:1px solid #dcdfe6"></div>
<svg class="a" style="left:991px;top:445px;" width="12" height="12" viewBox="0 0 12 12"><circle cx="7" cy="4.8" r="3.3" stroke="#424242" stroke-width="1.5" fill="none"/><path d="M4.6 7.2 L1.5 10.5" stroke="#424242" stroke-width="2" stroke-linecap="round"/></svg>
<div class="a" style="left:738px;top:461px;width:257px;height:18px;background:#eeeef2;"></div>
<div class="a t" style="left:744px;top:466px;font-size:9.5px;color:#1e1e1e;letter-spacing:0.005px;font-weight:normal;font-family:'Liberation Sans',sans-serif;">Arrange by: Category</div>
<svg class="a" style="left:835.8px;top:466.5px;" width="8" height="6" viewBox="0 0 8 6"><path d="M1.7999999999999998 1.9 L6.2 1.9 L4 4.1 Z" fill="#1e1e1e"/></svg>
<div class="a" style="left:738px;top:496px;width:257px;height:1px;background:#e2e2e6;"></div>
<div class="a" style="left:738px;top:515px;width:257px;height:1px;background:#e2e2e6;"></div>
<svg class="a" style="left:743px;top:483.8px;" width="7" height="9" viewBox="0 0 7 9"><path d="M1.5 1.2 L5 4.4 L1.5 7.6 Z" fill="none" stroke="#1e1e1e" stroke-width="1.1"/></svg>
<div class="a t" style="left:754.3px;top:484px;font-size:9.5px;color:#1e1e1e;letter-spacing:-0.143px;font-weight:normal;font-family:'Liberation Sans',sans-serif;">Brush</div>
<svg class="a" style="left:743px;top:502.4px;" width="7" height="9" viewBox="0 0 7 9"><path d="M1.5 1.2 L5 4.4 L1.5 7.6 Z" fill="none" stroke="#1e1e1e" stroke-width="1.1"/></svg>
<div class="a t" style="left:754.3px;top:502px;font-size:9.5px;color:#1e1e1e;letter-spacing:-0.043px;font-weight:normal;font-family:'Liberation Sans',sans-serif;">Appearance</div>
<svg class="a" style="left:743px;top:522px;" width="7" height="7" viewBox="0 0 7 7"><path d="M0.8 5.5 L5.5 5.5 L5.5 0.8 Z" fill="#1e1e1e"/></svg>
<div class="a t" style="left:754.3px;top:521px;font-size:9.5px;color:#1e1e1e;letter-spacing:0.044px;font-weight:normal;font-family:'Liberation Sans',sans-serif;">Common</div>
<div class="a t" style="left:753.9px;top:539px;font-size:9.5px;color:#1e1e1e;letter-spacing:0.075px;font-weight:normal;font-family:'Liberation Sans',sans-serif;">Content</div>
<div class="a" style="left:840.4px;top:535.3px;width:139.8px;height:15.1px;background:#ffffff;border:1px solid #b8bcc6"></div>
<div class="a" style="left:984px;top:540px;width:4.5px;height:5px;background:#ffffff;border:1px solid #424242"></div>
<div class="a" style="left:995px;top:479px;width:12.5px;height:73px;background:#e8e8ec;"></div>
<div class="a" style="left:997.5px;top:491.8px;width:7.0px;height:13.2px;background:#d6d7dc;"></div>
<svg class="a" style="left:997px;top:482px;" width="8" height="6" viewBox="0 0 8 6"><path d="M1 4.5 L7 4.5 L4 1.5 Z" fill="#868999"/></svg>
<svg class="a" style="left:997px;top:542px;" width="8" height="6" viewBox="0 0 8 6"><path d="M1 1.5 L7 1.5 L4 4.5 Z" fill="#868999"/></svg>
<div class="a" style="left:11px;top:577.5px;width:1003px;height:19.5px;background:#0e7ad0;"></div>
<div class="a t" style="left:14.5px;top:584px;font-size:9.5px;color:#ffffff;letter-spacing:-0.232px;font-weight:normal;font-family:'Liberation Sans',sans-serif;">Ready</div>
<svg class="a" style="left:1003px;top:586px;" width="9" height="9" viewBox="0 0 9 9"><g fill="#5aa0e0"><rect x="6" y="0" width="1" height="1"/><rect x="4" y="2" width="1" height="1"/><rect x="6" y="2" width="1" height="1"/><rect x="2" y="4" width="1" height="1"/><rect x="4" y="4" width="1" height="1"/><rect x="6" y="4" width="1" height="1"/></g></svg>
</body></html>
